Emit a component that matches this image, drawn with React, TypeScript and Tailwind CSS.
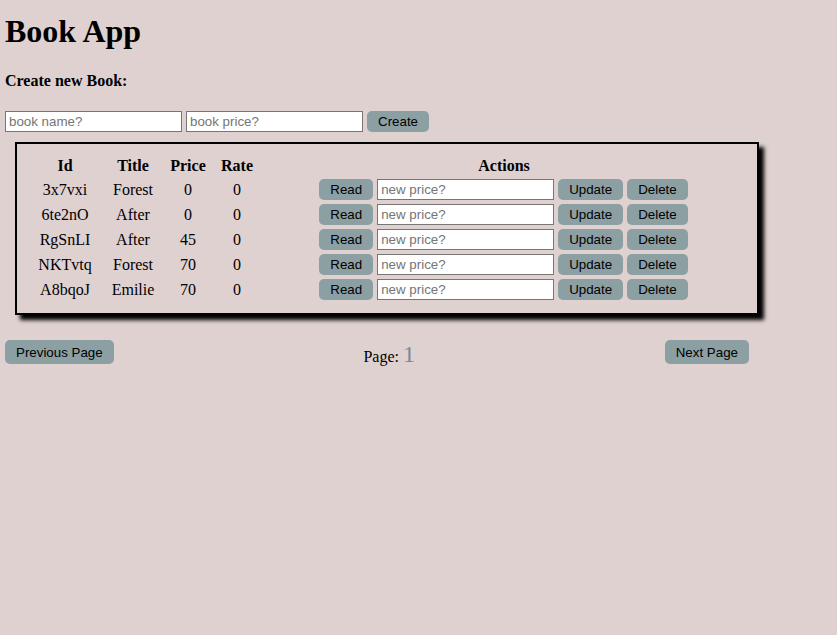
import React from "react";

const books = [
  { id: "3x7vxi", title: "Forest", price: 0, rate: 0 },
  { id: "6te2nO", title: "After", price: 0, rate: 0 },
  { id: "RgSnLI", title: "After", price: 45, rate: 0 },
  { id: "NKTvtq", title: "Forest", price: 70, rate: 0 },
  { id: "A8bqoJ", title: "Emilie", price: 70, rate: 0 },
];

const btn =
  "h-[21px] px-[11px] rounded-[5px] bg-[#8c9fa2] text-black text-[13.33px] leading-[15px] [font-family:'Liberation_Sans',Arial,sans-serif] border-0";
const inp =
  "h-[21px] w-[177px] px-[3px] bg-white border border-[#767676] text-[13.33px] leading-[15px] [font-family:'Liberation_Sans',Arial,sans-serif] placeholder:text-[#757575] outline-none";

export default function App() {
  return (
    <div className="min-h-[635px] w-full bg-[#dfd1d0] px-[5px] pt-[13px] text-black [font-family:'Liberation_Serif','Times_New_Roman',serif]">
      <h1 className="text-[32px] leading-[36px] font-bold">Book App</h1>
      <h4 className="mt-[23px] text-[16px] leading-[18px] font-bold">Create new Book:</h4>
      <div className="mt-[21px] flex items-center gap-[4px]">
        <input className={inp} placeholder="book name?" />
        <input className={inp} placeholder="book price?" />
        <button className={btn}>Create</button>
      </div>
      <div className="mt-[10px] ml-[10px] w-[744px] border-2 border-black px-[10px] pt-[10px] pb-[10px] shadow-[5px_5px_4px_black]">
        <table className="border-separate border-spacing-[2px] w-[720px] text-[16px] leading-[18px]">
          <thead>
            <tr>
              <th className="w-[72px] p-[1px] font-bold text-center">Id</th>
              <th className="w-[60px] p-[1px] font-bold text-center">Title</th>
              <th className="w-[46px] p-[1px] font-bold text-center">Price</th>
              <th className="w-[48px] p-[1px] font-bold text-center">Rate</th>
              <th className="p-[1px] font-bold text-center">Actions</th>
            </tr>
          </thead>
          <tbody>
            {books.map((b) => (
              <tr key={b.id}>
                <td className="p-[1px] text-center align-middle">{b.id}</td>
                <td className="p-[1px] text-center align-middle">{b.title}</td>
                <td className="p-[1px] text-center align-middle">{b.price}</td>
                <td className="p-[1px] text-center align-middle">{b.rate}</td>
                <td className="p-[1px] align-middle">
                  <div className="flex justify-center items-center gap-[4px] pr-[1px]">
                    <button className={btn}>Read</button>
                    <input className={inp} placeholder="new price?" />
                    <button className={btn}>Update</button>
                    <button className={btn}>Delete</button>
                  </div>
                </td>
              </tr>
            ))}
          </tbody>
        </table>
      </div>
      <div className="mt-[25px] w-[744px] flex justify-between items-start">
        <button className="h-[24px] px-[11px] rounded-[5px] bg-[#8c9fa2] text-black text-[13.33px] leading-[15px] [font-family:'Liberation_Sans',Arial,sans-serif]">
          Previous Page
        </button>
        <div className="pt-[3px] text-[16px] leading-[22px]">
          Page: <span className="text-[24px] text-[#778899]">1</span>
        </div>
        <button className="h-[24px] px-[11px] rounded-[5px] bg-[#8c9fa2] text-black text-[13.33px] leading-[15px] [font-family:'Liberation_Sans',Arial,sans-serif]">
          Next Page
        </button>
      </div>
    </div>
  );
}
